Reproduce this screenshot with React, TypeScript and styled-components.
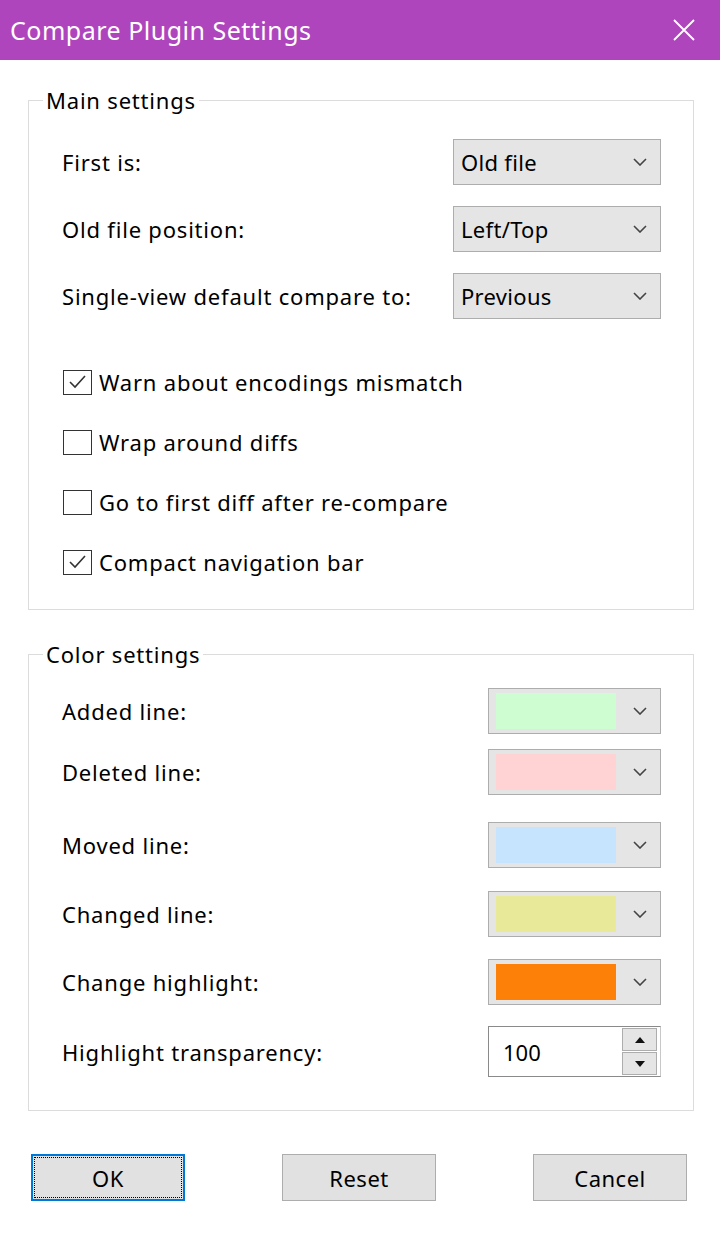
import React from 'react';
import styled, { createGlobalStyle } from 'styled-components';

const GlobalStyle = createGlobalStyle`
	body {
		margin: 0;
		background: #fff;
		font-family: 'Noto Sans', 'Open Sans', sans-serif;
		color: #000;
	}
`;

const Window = styled.div`
	width: 720px;
	height: 1240px;
	background: #fff;
	display: flex;
	flex-direction: column;
`;

const TitleBar = styled.div`
	height: 60px;
	flex: none;
	background: #ae45bd;
	display: flex;
	align-items: center;
	justify-content: space-between;
	padding: 0 25px 0 10px;
`;

const Title = styled.span`
	color: #fff;
	font-size: 25px;
	letter-spacing: 0.5px;
`;

const Body = styled.div`
	display: flex;
	flex-direction: column;
	padding: 26px 26px 0 28px;
	letter-spacing: 0.8px;
`;

const Group = styled.fieldset<{ $gap: number }>`
	margin: ${(p) => p.$gap}px 0 0;
	padding: 0;
	border: 1px solid #dcdcdc;
	min-width: 0;
`;

const Legend = styled.legend`
	margin-left: 14px;
	padding: 0 3px;
	font-size: 22px;
	line-height: 28px;
`;

const Rows = styled.div<{ $top: number; $bottom: number }>`
	display: flex;
	flex-direction: column;
	padding: ${(p) => p.$top}px 32px ${(p) => p.$bottom}px 33px;
`;

const Row = styled.div<{ $gap?: number }>`
	display: flex;
	align-items: center;
	justify-content: space-between;
	min-height: 46px;
	margin-top: ${(p) => p.$gap ?? 0}px;
`;

const Label = styled.span`
	font-size: 22px;
	white-space: nowrap;
`;

const Combo = styled.div<{ $width: number }>`
	width: ${(p) => p.$width}px;
	height: 46px;
	box-sizing: border-box;
	border: 1px solid #adadad;
	background: #e5e5e5;
	display: flex;
	align-items: center;
	padding: 0 13px 0 7px;
	font-size: 22px;
	letter-spacing: 0.3px;
`;

const ComboText = styled.span`
	flex: 1;
`;

const Swatch = styled.span<{ $color: string }>`
	width: 120px;
	height: 36px;
	background: ${(p) => p.$color};
	margin-right: auto;
`;

const CheckRow = styled.label<{ $gap?: number }>`
	display: flex;
	align-items: center;
	height: 30px;
	margin-top: ${(p) => p.$gap ?? 0}px;
	font-size: 22px;
	white-space: nowrap;
`;

const Box = styled.span`
	width: 29px;
	height: 25px;
	box-sizing: border-box;
	border: 1px solid #333;
	background: #fff;
	display: flex;
	align-items: center;
	justify-content: center;
	margin: 0 7px 0 1px;
`;

const Spin = styled.div`
	width: 173px;
	height: 51px;
	box-sizing: border-box;
	border: 1px solid #8a8a8a;
	border-right-color: #c8c8c8;
	background: #fff;
	display: flex;
	align-items: center;
	padding: 0 3px 0 14px;
	font-size: 22px;
	letter-spacing: 0;
`;

const SpinButtons = styled.div`
	display: flex;
	flex-direction: column;
	gap: 1px;
`;

const SpinButton = styled.div`
	width: 35px;
	height: 23px;
	box-sizing: border-box;
	border: 1px solid #adadad;
	background: #e5e5e5;
	display: flex;
	align-items: center;
	justify-content: center;
`;

const ButtonBar = styled.div`
	display: flex;
	justify-content: space-between;
	margin: 43px 7px 0 3px;
`;

const Button = styled.button<{ $focused?: boolean }>`
	width: 154px;
	height: 47px;
	box-sizing: border-box;
	font-family: inherit;
	font-size: 22px;
	letter-spacing: 0.5px;
	color: #000;
	background: #e1e1e1;
	border: ${(p) => (p.$focused ? '2px solid #0078d7' : '1px solid #adadad')};
	outline: ${(p) => (p.$focused ? '1px dotted #000' : 'none')};
	outline-offset: -4px;
	padding: 0;
`;

const Chevron = () => (
	<svg width="14" height="8" viewBox="0 0 14 8">
		<polyline points="1,1 7,7 13,1" fill="none" stroke="#444" strokeWidth="1.6" />
	</svg>
);

const Check = ({ on }: { on: boolean }) => (
	<Box>
		{on && (
			<svg width="21" height="18" viewBox="0 0 21 18">
				<polyline points="3,9 8,14 18,3" fill="none" stroke="#333" strokeWidth="1.6" />
			</svg>
		)}
	</Box>
);

const selects = [
	{ label: 'First is:', value: 'Old file' },
	{ label: 'Old file position:', value: 'Left/Top' },
	{ label: 'Single-view default compare to:', value: 'Previous' },
];

const checks = [
	{ label: 'Warn about encodings mismatch', on: true },
	{ label: 'Wrap around diffs', on: false },
	{ label: 'Go to first diff after re-compare', on: false },
	{ label: 'Compact navigation bar', on: true },
];

const colors = [
	{ label: 'Added line:', color: '#cdfdd0', gap: 0 },
	{ label: 'Deleted line:', color: '#ffd2d3', gap: 15 },
	{ label: 'Moved line:', color: '#c6e4fd', gap: 27 },
	{ label: 'Changed line:', color: '#e8ea9a', gap: 23 },
	{ label: 'Change highlight:', color: '#fd8109', gap: 22 },
];

const App = () => {
	return (
		<Window>
			<GlobalStyle />
			<TitleBar>
				<Title>Compare Plugin Settings</Title>
				<svg width="22" height="22" viewBox="0 0 22 22">
					<path d="M1 1 L21 21 M21 1 L1 21" stroke="#fff" strokeWidth="1.8" />
				</svg>
			</TitleBar>
			<Body>
				<Group $gap={0}>
					<Legend>Main settings</Legend>
					<Rows $top={25} $bottom={32}>
						{selects.map((s, i) => (
							<Row key={s.label} $gap={i ? 21 : 0}>
								<Label>{s.label}</Label>
								<Combo $width={208}>
									<ComboText>{s.value}</ComboText>
									<Chevron />
								</Combo>
							</Row>
						))}
						{checks.map((c, i) => (
							<CheckRow key={c.label} $gap={i ? 30 : 48}>
								<Check on={c.on} />
								{c.label}
							</CheckRow>
						))}
					</Rows>
				</Group>
				<Group $gap={30}>
					<Legend>Color settings</Legend>
					<Rows $top={20} $bottom={33}>
						{colors.map((c) => (
							<Row key={c.label} $gap={c.gap}>
								<Label>{c.label}</Label>
								<Combo $width={173}>
									<Swatch $color={c.color} />
									<Chevron />
								</Combo>
							</Row>
						))}
						<Row $gap={21}>
							<Label>Highlight transparency:</Label>
							<Spin>
								<ComboText>100</ComboText>
								<SpinButtons>
									<SpinButton>
										<svg width="10" height="6" viewBox="0 0 10 6">
											<polygon points="0,6 5,0 10,6" fill="#111" />
										</svg>
									</SpinButton>
									<SpinButton>
										<svg width="10" height="6" viewBox="0 0 10 6">
											<polygon points="0,0 10,0 5,6" fill="#111" />
										</svg>
									</SpinButton>
								</SpinButtons>
							</Spin>
						</Row>
					</Rows>
				</Group>
				<ButtonBar>
					<Button $focused>OK</Button>
					<Button>Reset</Button>
					<Button>Cancel</Button>
				</ButtonBar>
			</Body>
		</Window>
	);
};

export default App;
